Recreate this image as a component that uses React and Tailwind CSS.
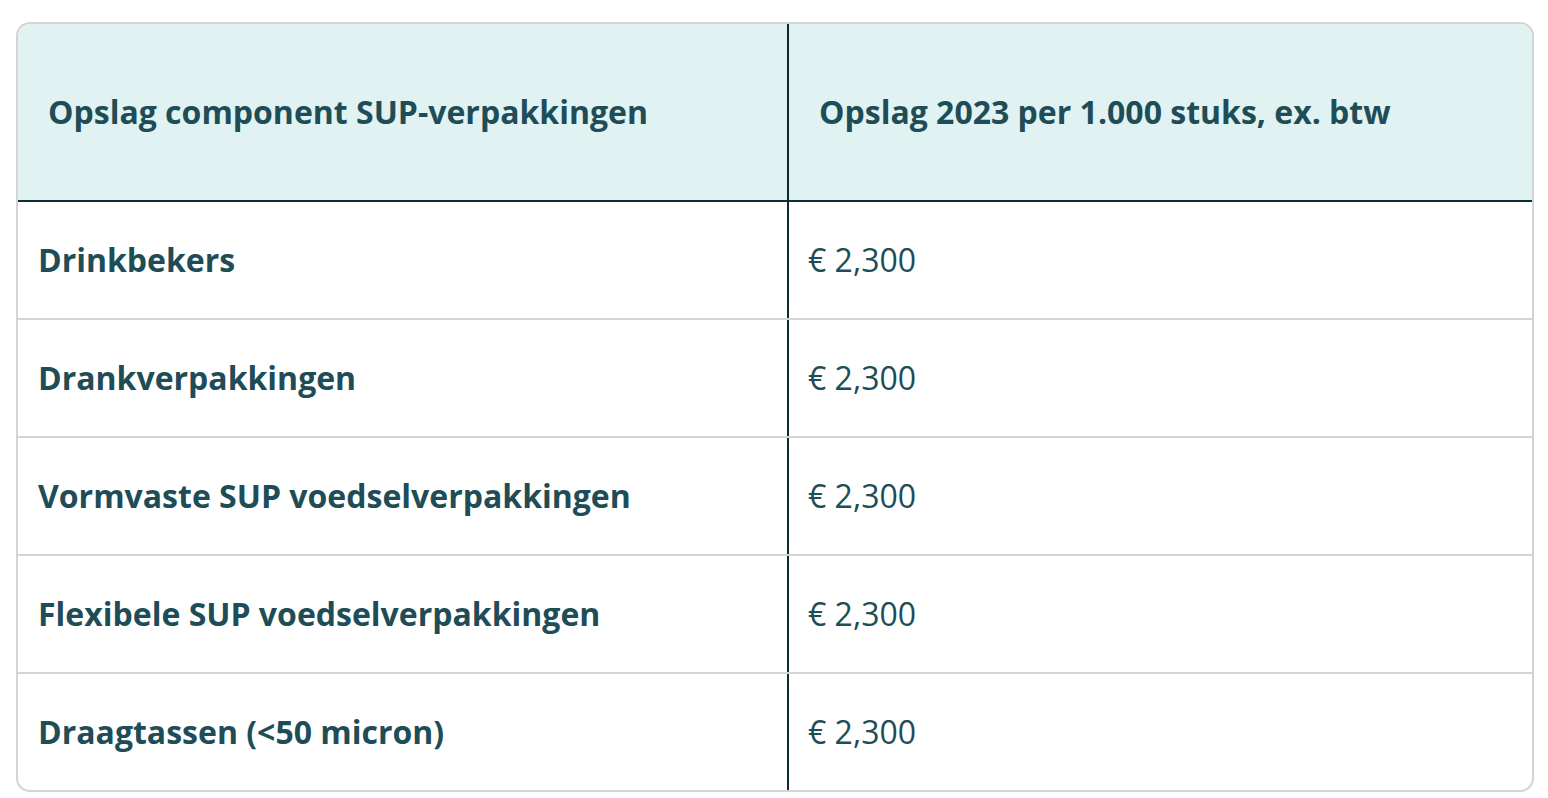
const rows = [
  'Drinkbekers',
  'Drankverpakkingen',
  'Vormvaste SUP voedselverpakkingen',
  'Flexibele SUP voedselverpakkingen',
  'Draagtassen (<50 micron)',
];

export default function App() {
  return (
    <div className="min-h-[798px] bg-white pt-[22px] pl-[16px]" style={{ fontFamily: '"Open Sans", sans-serif' }}>
      <div className="w-[1518px] rounded-[14px] border-2 border-[#d4d4d4] overflow-hidden text-[#1e4d57]">
        {/* Header */}
        <div className="flex h-[178px] bg-[#e0f2f2] border-b-2 border-[#0e2b31]">
          <div className="w-[771px] shrink-0 flex items-center pl-[30px] border-r-2 border-[#0e2b31] text-[32px] font-bold">
            Opslag component SUP-verpakkingen
          </div>
          <div className="flex-1 flex items-center pl-[30px] text-[32px] font-bold">
            Opslag 2023 per 1.000 stuks, ex. btw
          </div>
        </div>
        {/* Rows */}
        {rows.map((name, i) => (
          <div
            key={name}
            className={
              i < rows.length - 1
                ? 'flex h-[118px] border-b-2 border-[#d4d4d4]'
                : 'flex h-[116px]'
            }
          >
            <div className="w-[771px] shrink-0 flex items-center pl-[20px] border-r-2 border-[#0e2b31] text-[32px] font-bold">
              {name}
            </div>
            <div className="flex-1 flex items-center pl-[19px] text-[32px]">€ 2,300</div>
          </div>
        ))}
      </div>
    </div>
  );
}
